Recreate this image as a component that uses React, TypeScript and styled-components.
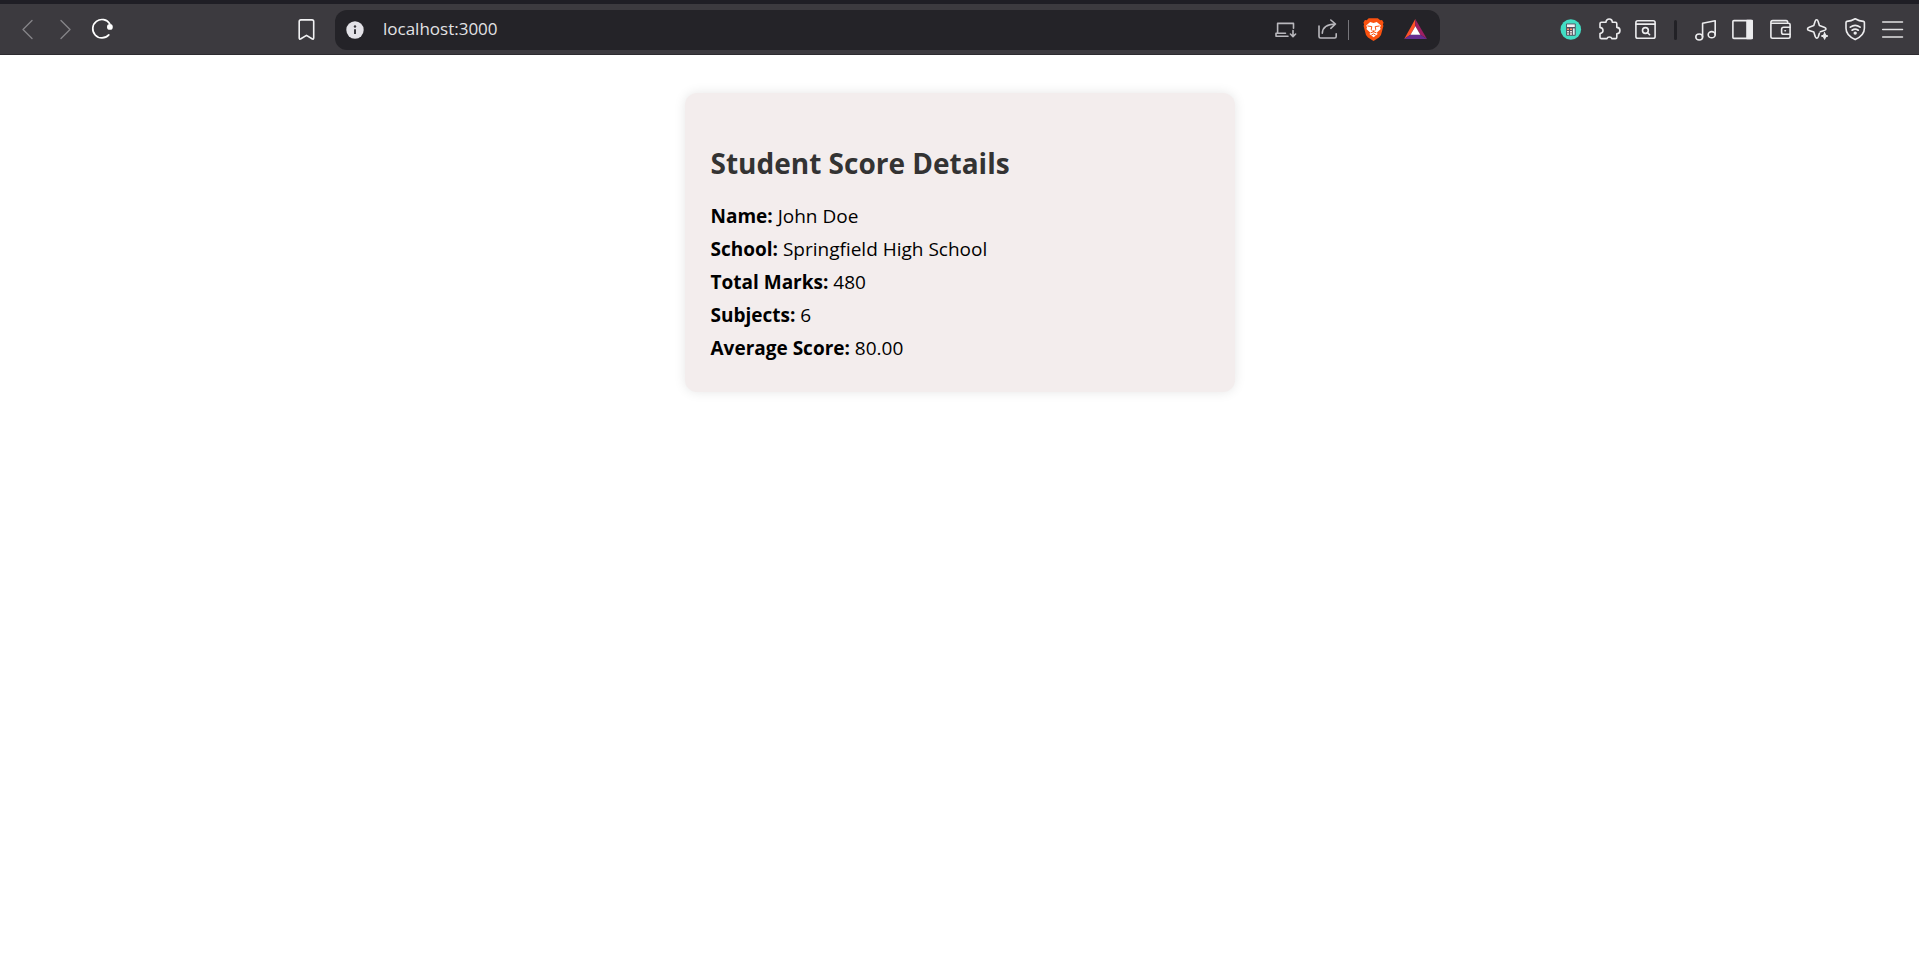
import React from "react";
import styled, { createGlobalStyle } from "styled-components";

const GlobalStyle = createGlobalStyle`
  *, *::before, *::after { box-sizing: border-box; }
  body {
    margin: 0;
    background: #ffffff;
    color: #000000;
    font-family: "Segoe UI", "Open Sans", "Noto Sans", sans-serif;
  }
`;

const Toolbar = styled.header`
  display: flex;
  align-items: center;
  height: 55px;
  border-top: 4px solid #1f1e25;
  background: #3c3a3f;
  box-shadow: inset 0 -1px 0 #2d2b30;
`;

const NavZone = styled.nav`
  display: flex;
  flex: 0 0 335px;
  align-items: center;
  gap: 17px;
  padding: 0 18px 0 17px;
`;

const IconButton = styled.button<{ $tone?: string; $push?: boolean }>`
  display: flex;
  flex: none;
  width: 21px;
  height: 21px;
  margin: 0 0 0 ${(p) => (p.$push ? "auto" : "0")};
  padding: 0;
  border: 0;
  background: none;
  color: ${(p) => p.$tone ?? "#ececee"};
  cursor: pointer;
`;

const Glyph = styled.svg`
  display: block;
  width: 21px;
  height: 21px;
  overflow: visible;
  fill: none;
  stroke: currentColor;
  stroke-width: 1.6;
  stroke-linecap: round;
  stroke-linejoin: round;
`;

const AddressBar = styled.div`
  display: flex;
  flex: 1 1 auto;
  min-width: 0;
  align-items: center;
  height: 40px;
  padding: 0 14px 0 10px;
  border-radius: 12px;
  background: #242328;
`;

const AddressInput = styled.input`
  flex: 1 1 auto;
  min-width: 0;
  height: 40px;
  margin: 0;
  padding: 0 17px 2px;
  border: 0;
  outline: 0;
  background: none;
  color: #e2e2e5;
  font-family: inherit;
  font-size: 17px;
`;

const AddressActions = styled.div`
  display: flex;
  flex: none;
  gap: 21px;
`;

const AddressDivider = styled.span`
  width: 1px;
  height: 20px;
  margin: 0 14px 0 10px;
  background: #77767b;
`;

const ExtensionZone = styled.div`
  display: flex;
  flex: 0 0 479px;
  align-items: center;
  justify-content: flex-end;
  gap: 18px;
  padding-right: 16px;
`;

const ExtensionGroup = styled.div`
  display: flex;
  gap: 16px;
`;

const MenuGroup = styled.div`
  display: flex;
  flex: 0 0 208px;
  justify-content: space-between;
`;

const GroupDivider = styled.span`
  width: 3px;
  height: 20px;
  border-radius: 2px;
  background: #222126;
`;

const Page = styled.main`
  padding: 38px 20px;
`;

const Card = styled.section`
  max-width: 550px;
  margin: 0 auto;
  padding: 49px 26px 27px;
  border-radius: 12px;
  background: #f3eded;
  box-shadow: 0 0 12px rgba(0, 0, 0, 0.1);
`;

const Title = styled.h2`
  margin: 0 0 16px;
  color: #333333;
  font-size: 28px;
  font-weight: 700;
  line-height: 42px;
`;

const Detail = styled.p`
  margin: 0;
  font-size: 19px;
  line-height: 33px;
`;

const Label = styled.strong`
  font-weight: 700;
`;

const details = [
  { label: "Name", value: "John Doe" },
  { label: "School", value: "Springfield High School" },
  { label: "Total Marks", value: "480" },
  { label: "Subjects", value: "6" },
  { label: "Average Score", value: "80.00" },
];

type ToolProps = {
  label: string;
  tone?: string;
  push?: boolean;
  children: React.ReactNode;
};

function Tool({ label, tone, push, children }: ToolProps) {
  return (
    <IconButton type="button" aria-label={label} $tone={tone} $push={push}>
      <Glyph viewBox="0 0 21 21" aria-hidden="true">
        {children}
      </Glyph>
    </IconButton>
  );
}

function BrowserToolbar() {
  return (
    <Toolbar>
      <NavZone aria-label="Browser">
        <Tool label="Back" tone="#858388">
          <path d="M15 1.5 6 10.5l9 9" strokeWidth="1.4" />
        </Tool>
        <Tool label="Forward" tone="#858388">
          <path d="m6 1.5 9 9-9 9" strokeWidth="1.4" />
        </Tool>
        <Tool label="Reload" tone="#ffffff">
          <path d="M16.8 4.9A9.2 9.2 0 1 0 15.8 15.9" strokeWidth="1.7" />
          <circle cx="16.9" cy="7.9" r="2.9" fill="currentColor" stroke="none" />
        </Tool>
        <Tool label="Bookmark" tone="#f2f2f4" push>
          <path d="M3.2 18.8V2.6Q3.2.9 4.9.9H16Q17.7.9 17.7 2.6V18.8Q17.7 20.8 16 19.8L10.5 16.4 4.9 19.8Q3.2 20.8 3.2 18.8Z" />
        </Tool>
      </NavZone>

      <AddressBar>
        <Tool label="Site information">
          <circle cx="10" cy="11" r="8.7" fill="#e3e2e7" stroke="none" />
          <path d="M10 10.2v4.9" stroke="#37363b" strokeWidth="2" strokeLinecap="butt" />
          <circle cx="10" cy="7.5" r="1.2" fill="#37363b" stroke="none" />
        </Tool>
        <AddressInput aria-label="Address" defaultValue="localhost:3000" spellCheck={false} />
        <AddressActions>
          <Tool label="Install app" tone="#b9b8bd">
            <path d="M2.6 13.8V4.4h15.9v4.8M1 16.8v-2.6h9.5M1 17.2h12" />
            <path d="M18 11.5v6M15.4 15l2.6 2.6 2.6-2.6" />
          </Tool>
          <Tool label="Share" tone="#b9b8bd">
            <path d="M2 7v10.5q0 1.5 1.5 1.5h14.2q1.5 0 1.5-1.5v-2.8" />
            <path d="M5.3 14.2C5.5 8.5 9 5.3 18.5 5M13.8 1l4.7 4-4.7 4.3" />
          </Tool>
        </AddressActions>
        <AddressDivider />
        <AddressActions>
          <Tool label="Brave Shields">
            <path
              d="M5.7-.8h9.1l2.5 2.1 1.8-.2 1.5 2.6-.7 1.5.5 1.7-2.4 9.2-2 2.4-5.5 3.5-5.5-3.5-2-2.4L.6 6.9l.5-1.7-.7-1.5 1.5-2.6 1.8.2Z"
              fill="#fb5210"
              stroke="none"
            />
            <path
              d="M7.2 3.1 10.5 4l3.3-.9 4.1 3.4-.9 2.1.7 1.3-4 3.8 1 1.4-4.1 3.2-4.2-3.2 1-1.4-4-3.8.7-1.3-.9-2.1Z"
              fill="#ffffff"
              stroke="none"
            />
            <path
              d="m4.8 7 4 .6-.6 3.1 1.2 1.1M16.2 7l-4 .6.6 3.1-1.2 1.1M8 13.7l2.5-.9 2.5.9M10.5 12.8v-1M8.6 16l1.9-1.1 1.9 1.1"
              stroke="#fb5210"
              strokeWidth="1"
            />
          </Tool>
          <Tool label="Brave Rewards">
            <g stroke="none">
              <path d="M10.3 0v7.2L5.7 15.6-.8 20Z" fill="#ff5128" />
              <path d="M10.3 0 22 20l-6.8-4.4-4.9-8.4Z" fill="#9e1f63" />
              <path d="M-.8 20 5.7 15.6h9.5L22 20Z" fill="#662d91" />
              <path d="m10.4 7.2 4.9 8.6H5.5Z" fill="#ffffff" />
            </g>
          </Tool>
        </AddressActions>
      </AddressBar>

      <ExtensionZone>
        <ExtensionGroup>
          <Tool label="Calculator extension">
            <g stroke="none">
              <circle cx="9.8" cy="10.5" r="10.3" fill="#42ddc4" />
              <rect x="5.1" y="4.4" width="9.6" height="12.4" rx=".8" fill="#54505e" />
              <path d="M6 5.4h7.8v2.6H6z" fill="#eef2f5" />
              <path d="M6 9.4h2v1.6H6zm3 0h2v1.6H9z" fill="#ff9470" />
              <path d="M6 12h2v1.5H6zm3 0h2v1.5H9zm-3 2.3h2v1.5H6zm3 0h2v1.5H9z" fill="#e8dcda" />
              <path d="M11.9 9.4h1.8v6.4h-1.8z" fill="#d8f0f2" />
            </g>
          </Tool>
          <Tool label="Extensions">
            <path d="M3.4 3.3H8C8-1.1 14.3-1.1 14.3 3.3h3.1q1.4 0 1.4 1.4v3.7c4.2.1 4.2 6.3 0 6.4v3.4q0 1.4-1.4 1.4h-3.6c-.5-2.2-4.3-2.2-4.8 0H3.4q-1.4 0-1.4-1.4v-3.6c4-.8 4-5.4 0-6.2V4.7Q2 3.3 3.4 3.3Z" />
          </Tool>
          <Tool label="Search tabs">
            <rect x=".9" y="1.7" width="19.2" height="17.6" rx="1.8" />
            <path d="M1 5.1h19" />
            <circle cx="10.4" cy="11.5" r="2.9" />
            <path d="m12.6 13.7 2 2" />
          </Tool>
        </ExtensionGroup>
        <GroupDivider />
        <MenuGroup>
          <Tool label="Media">
            <ellipse cx="4.2" cy="18" rx="3.4" ry="3" />
            <ellipse cx="16.7" cy="15.7" rx="3.5" ry="3.1" />
            <path d="M7.6 18V4.2L20.2 1.7v14" />
          </Tool>
          <Tool label="Sidebar">
            <rect x=".9" y="1.6" width="19.2" height="17.8" rx="1" />
            <path d="M15 1.6h5.1v17.8H15z" fill="currentColor" />
          </Tool>
          <Tool label="Wallet">
            <path d="M17.7 4V3.2q0-1.6-1.6-1.6H2.7Q.9 1.6.9 3.4v14.2q0 1.7 1.7 1.7h15.8q1.7 0 1.7-1.7V5.8q0-1.6-1.6-1.6H2.3" />
            <path d="M20 8.3h-6.3q-2.1 0-2.1 2.1v2.8q0 2.1 2.1 2.1H20M15 11.8h.4" />
          </Tool>
          <Tool label="Assistant">
            <path d="M9.6.8Q10.7.8 11 2L12.4 6.6l4.8 1.7q1.8.7 1.8 1.7t-1.8 1.5l-3.8 1.2M9.6.8Q8.5.8 8.2 2L6.8 6.6 2.2 8.2Q.5 8.9.5 10t1.7 1.6l4.6 1.5 1.4 4.5q.5 1.5 1.5 1.5t1.6-1.4l1.1-3.5" />
            <path d="m17.6 13.6 1 2.4 2.3 1-2.3 1-1 2.4-1-2.4-2.3-1 2.3-1Z" fill="currentColor" strokeWidth="1" />
          </Tool>
          <Tool label="VPN">
            <path d="M10.2-.3Q14.2 2 18.5 2.4q.9.2.9 1.2v5.7q0 7.2-9.2 11.3Q1 16.5 1 9.3V3.6q0-1 .9-1.2Q6.2 2 10.2-.3Z" />
            <path d="M5.3 8.2q4.9-3.8 9.8 0M7.1 11.2q3.1-2.3 6.2 0" strokeWidth="1.7" />
            <circle cx="10.2" cy="14.1" r="1.7" fill="currentColor" stroke="none" />
          </Tool>
          <Tool label="Main menu" tone="#e2e2e4">
            <path d="M.7 3h19.8M.7 10.5h19.8M.7 18h19.8" strokeWidth="1.5" />
          </Tool>
        </MenuGroup>
      </ExtensionZone>
    </Toolbar>
  );
}

export default function App() {
  return (
    <>
      <GlobalStyle />
      <BrowserToolbar />
      <Page>
        <Card>
          <Title>Student Score Details</Title>
          {details.map(({ label, value }) => (
            <Detail key={label}>
              <Label>{label}:</Label> {value}
            </Detail>
          ))}
        </Card>
      </Page>
    </>
  );
}
